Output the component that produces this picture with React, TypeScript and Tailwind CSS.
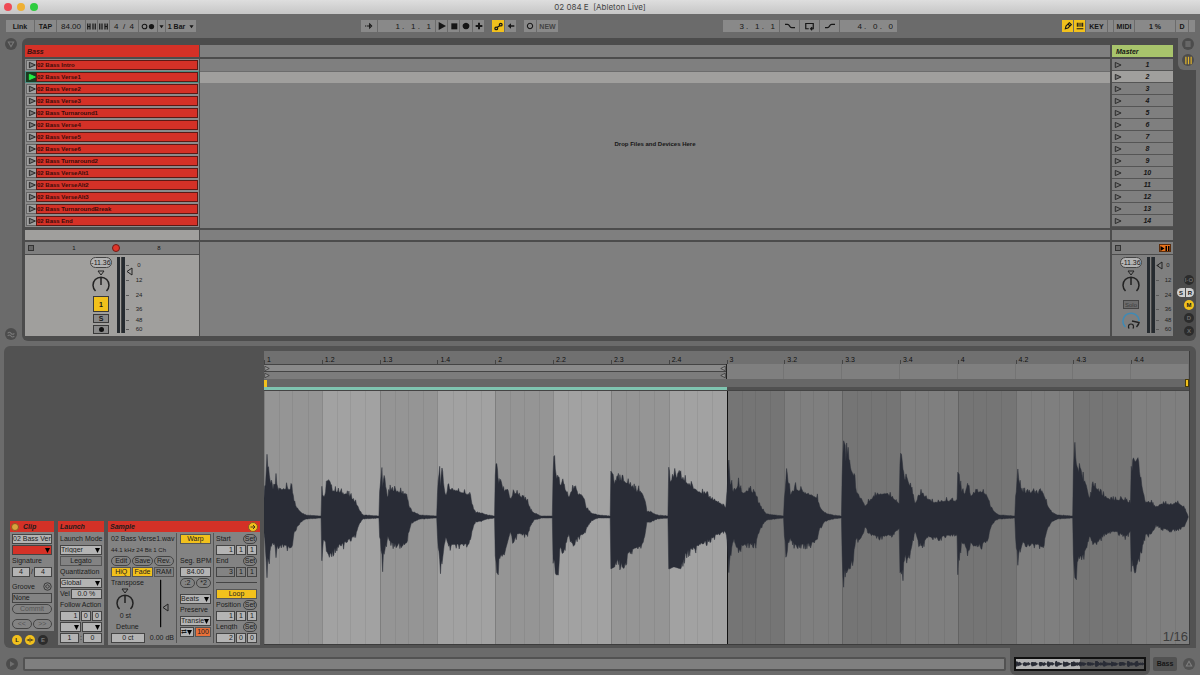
import type { ReactNode } from 'react';

const clips = [
  'Intro', 'Verse1', 'Verse2', 'Verse3', 'Turnaround1', 'Verse4', 'Verse5', 'Verse6',
  'Turnaround2', 'VerseAlt1', 'VerseAlt2', 'VerseAlt3', 'TurnaroundBreak', 'End',
];
const playing = 1;

const beats = ['1', '1.2', '1.3', '1.4', '2', '2.2', '2.3', '2.4', '3', '3.2', '3.3', '3.4', '4', '4.2', '4.3', '4.4'];

// [x inside the beat, height above the centre, height below it]
const envelope: number[][][] = [
  [[0, 20, 15], [1, 35, 25], [3, 63, 61], [5, 47, 42], [7, 33, 30], [10, 28, 25], [12, 39, 38], [14, 28, 28], [20, 30, 30], [28, 29, 32], [30, 16, 17], [33, 9, 10], [38, 4, 4], [42, 2, 2], [57, 1, 1]],
  [[0, 33, 44], [2, 22, 25], [5, 34, 36], [7, 38, 41], [10, 28, 37], [15, 27, 30], [20, 25, 29], [25, 24, 25], [30, 20, 22], [34, 15, 18], [37, 8, 8], [41, 2, 2], [57, 1, 1]],
  [[0, 25, 20], [2, 53, 45], [3, 40, 55], [5, 38, 35], [8, 20, 20], [10, 28, 26], [15, 28, 28], [22, 25, 29], [27, 24, 27], [29, 12, 14], [32, 6, 6], [40, 2, 2], [57, 1, 1]],
  [[0, 25, 20], [2, 60, 50], [3, 40, 57], [5, 44, 42], [8, 22, 20], [11, 30, 30], [18, 28, 29], [28, 25, 29], [33, 22, 24], [35, 11, 12], [38, 5, 5], [44, 4, 4], [50, 2, 2], [57, 1, 1]],
  [[0, 40, 40], [1, 58, 55], [3, 40, 58], [5, 35, 40], [9, 27, 40], [12, 30, 28], [15, 18, 16], [18, 25, 25], [22, 25, 18], [27, 20, 17], [32, 17, 19], [35, 8, 8], [39, 4, 3], [46, 1, 1], [57, 1, 1]],
  [[0, 45, 45], [1, 67, 54], [3, 46, 58], [5, 44, 58], [7, 34, 30], [10, 33, 40], [13, 28, 24], [16, 20, 18], [20, 30, 30], [25, 24, 20], [31, 20, 18], [33, 10, 12], [38, 4, 4], [45, 2, 1], [57, 1, 1]],
  [[0, 46, 52], [4, 40, 50], [7, 38, 45], [13, 38, 52], [18, 35, 36], [25, 28, 33], [31, 26, 30], [34, 18, 20], [36, 6, 5], [40, 5, 5], [46, 2, 2], [57, 1, 1]],
  [[0, 50, 52], [1, 45, 52], [5, 42, 50], [12, 42, 52], [18, 36, 36], [25, 30, 32], [35, 24, 27], [45, 18, 20], [53, 13, 16], [57, 10, 14]],
  [[0, 20, 20], [2, 60, 58], [4, 38, 40], [7, 25, 22], [12, 34, 35], [16, 25, 27], [22, 28, 28], [29, 24, 28], [32, 14, 16], [36, 8, 8], [40, 3, 3], [57, 1, 1]],
  [[0, 20, 20], [2, 50, 50], [4, 40, 30], [6, 24, 22], [11, 30, 30], [18, 26, 29], [25, 24, 28], [33, 20, 24], [35, 10, 12], [41, 4, 4], [48, 2, 2], [57, 1, 1]],
  [[0, 40, 40], [1, 78, 74], [3, 72, 60], [6, 65, 56], [9, 50, 50], [12, 42, 35], [14, 28, 22], [17, 20, 25], [19, 20, 22], [23, 11, 10], [28, 18, 18], [35, 24, 20], [44, 25, 20], [50, 21, 18], [57, 14, 12]],
  [[0, 55, 50], [1, 67, 55], [3, 50, 64], [5, 38, 40], [8, 38, 45], [12, 28, 28], [15, 14, 14], [18, 20, 25], [22, 25, 30], [28, 18, 20], [35, 15, 22], [45, 17, 20], [57, 17, 18]],
  [[0, 45, 58], [2, 42, 45], [4, 30, 28], [7, 24, 28], [10, 36, 38], [13, 22, 26], [18, 27, 28], [25, 26, 28], [30, 20, 24], [33, 10, 10], [37, 5, 4], [41, 2, 2], [57, 1, 1]],
  [[0, 20, 20], [2, 50, 50], [4, 36, 38], [7, 26, 26], [12, 26, 28], [20, 25, 28], [28, 24, 28], [32, 12, 12], [36, 5, 5], [42, 2, 2], [57, 1, 1]],
  [[0, 50, 40], [1, 80, 60], [3, 60, 63], [5, 48, 42], [9, 40, 42], [13, 34, 32], [16, 18, 20], [20, 34, 28], [25, 28, 25], [30, 22, 18], [38, 18, 15], [45, 18, 16], [52, 18, 20], [57, 14, 15]],
  [[0, 50, 50], [2, 60, 52], [4, 55, 57], [7, 60, 46], [9, 42, 35], [12, 26, 28], [14, 16, 18], [20, 15, 18], [25, 10, 8], [30, 14, 12], [40, 13, 14], [47, 15, 12], [53, 10, 10], [56, 3, 3], [57, 0, 0]],
];

const BEAT = 57.75;

const noise = (n: number) => {
  const v = Math.sin(n * 12.9898) * 43758.5453;
  return v - Math.floor(v);
};

function level(points: number[][], x: number, side: number) {
  const i = points.findIndex(p => p[0] >= x);
  if (i === -1) return points[points.length - 1][side];
  if (i === 0) return points[0][side];
  const a = points[i - 1];
  const b = points[i];
  return a[side] + ((b[side] - a[side]) * (x - a[0])) / (b[0] - a[0]);
}

// the attack stays narrow, the body is full with a few spikes
const ragged = (x: number, seed: number) => {
  const n = noise(seed);
  return x > 0 && x < 4 ? 0.75 + n * 0.27 : 0.93 + n * n * n * 0.24;
};

function wavePath() {
  const top: string[] = [];
  const bottom: string[] = [];
  envelope.forEach((points, beat) => {
    const peak = Math.max(...points.map(p => p[1]));
    const trough = Math.max(...points.map(p => p[2]));
    for (let i = 0; i <= 76; i++) {
      const x = i * 0.75;
      const px = (beat * BEAT + x).toFixed(1);
      const lift = level(points, x, 1);
      const drop = level(points, x, 2);
      const up = lift > peak * 0.92 ? lift : lift * ragged(x, beat * 83 + i);
      const down = drop > trough * 0.95 ? drop : drop * ragged(x, beat * 97 + i + 2000);
      top.push(`${px} ${(126.5 - up).toFixed(1)}`);
      bottom.unshift(`${px} ${(126.5 + down).toFixed(1)}`);
    }
  });
  return `M${top.join('L')}L${bottom.join('L')}Z`;
}

const wave = wavePath();

function ToolButton({ className, label, children }: { className: string; label?: string; children: ReactNode }) {
  return (
    <button aria-label={label} className={`flex h-3 items-center justify-center text-[7px] font-bold leading-none ${className}`}>
      {children}
    </button>
  );
}

function Icon({ d, size = 'size-2', fill = false }: { d: string; size?: string; fill?: boolean }) {
  return (
    <svg viewBox="0 0 12 12" className={size} fill={fill ? 'currentColor' : 'none'} stroke="currentColor" strokeWidth={fill ? 0 : 1.6}>
      <path d={d} />
    </svg>
  );
}

function Toolbar() {
  const b = 'bg-[#898989]';
  const position = 'h-3 bg-[#898989] pr-1 text-right text-[8px] leading-none outline-none';
  return (
    <div className="flex items-center justify-between py-[6px] pl-[6px] pr-[5px]">
      <div className="flex gap-px">
        <ToolButton className={`w-7 ${b}`}>Link</ToolButton>
        <ToolButton className={`w-[21px] ${b}`}>TAP</ToolButton>
        <input aria-label="Tempo" defaultValue="84.00" className="h-3 w-7 bg-[#898989] text-center text-[8px] leading-none outline-none" />
        <ToolButton className={`w-[11px] ${b}`} label="Nudge down"><Icon d="M1 2v8M4 2v8M8 2v8M11 2v8M1 6h3" size="size-[9px]" /></ToolButton>
        <ToolButton className={`w-[11px] ${b}`} label="Nudge up"><Icon d="M1 2v8M4 2v8M8 2v8M11 2v8M8 6h3" size="size-[9px]" /></ToolButton>
        <input aria-label="Time signature" defaultValue="4  /  4" className="h-3 w-7 bg-[#898989] text-center text-[8px] leading-none outline-none" />
        <ToolButton className={`w-[18px] ${b}`} label="Metronome">
          <svg viewBox="0 0 24 12" className="h-[7px] w-[14px]"><circle cx="6" cy="6" r="4" fill="none" stroke="currentColor" strokeWidth="1.800" /><circle cx="18" cy="6" r="4.500" fill="currentColor" /></svg>
        </ToolButton>
        <ToolButton className={`w-[7px] ${b}`} label="Metronome settings"><Icon size="size-[5px]" fill d="M1 3h10L6 10z" /></ToolButton>
        <ToolButton className={`w-[30px] gap-1 ${b}`}>1 Bar <Icon size="size-[5px]" fill d="M1 3h10L6 10z" /></ToolButton>
      </div>
      <div className="flex gap-2">
        <div className="flex gap-px">
          <ToolButton className={`w-4 ${b}`} label="Follow"><Icon d="M0 6h2M3 6h4M7 3l3 3-3 3z" /></ToolButton>
          <input aria-label="Arrangement position" defaultValue="1 .   1 .   1" className={`w-[57px] ${position}`} />
          <ToolButton className={`w-[11px] ${b}`} label="Play"><Icon fill d="M1 0l11 6-11 6z" /></ToolButton>
          <ToolButton className={`w-[11px] ${b}`} label="Stop"><Icon fill d="M2 2h9v9H2z" /></ToolButton>
          <ToolButton className={`w-3 ${b}`} label="Record"><Icon fill d="M6 1a5 5 0 1 0 .01 0z" /></ToolButton>
          <ToolButton className={`w-[11px] ${b}`} label="Overdub"><Icon fill d="M4.500 1h3v3.500H11v3H7.500V11h-3V7.500H1v-3h3.500z" /></ToolButton>
        </div>
        <div className="flex gap-px">
          <ToolButton className="w-3 bg-[#f2c11c]" label="Automation arm">
            <svg viewBox="0 0 12 12" className="size-[9px]" fill="none" stroke="currentColor" strokeWidth="1.700"><circle cx="3" cy="8.500" r="1.800" /><circle cx="9" cy="3.500" r="1.800" /><path d="M4.500 7L7.500 5" /></svg>
          </ToolButton>
          <ToolButton className={`w-[11px] ${b}`} label="Re-enable automation"><Icon fill d="M11 5H6V2L1 6l5 4V7h5z" /></ToolButton>
        </div>
        <div className="flex gap-px">
          <ToolButton className={`w-3 ${b}`} label="Session record"><Icon d="M6 2a4 4 0 1 0 .01 0z" /></ToolButton>
          <ToolButton className={`w-[21px] text-[#444] ${b}`}>NEW</ToolButton>
        </div>
      </div>
      <div className="flex gap-px">
        <input aria-label="Loop start" defaultValue="3 .   1 .   1" className={`w-14 ${position}`} />
        <ToolButton className={`w-[19px] ${b}`} label="Punch in"><Icon size="size-[10px]" d="M0 4h3c3 0 2 4 5 4h4" /></ToolButton>
        <ToolButton className={`w-[19px] ${b}`} label="Loop"><Icon size="size-[9px]" d="M5 9H1V2h10v7H8M9.500 7L7.500 9l2 2" /></ToolButton>
        <ToolButton className={`w-[19px] ${b}`} label="Punch out"><Icon size="size-[10px]" d="M0 8h3c3 0 2-4 5-4h4" /></ToolButton>
        <input aria-label="Loop length" defaultValue="4 .   0 .   0" className={`w-[57px] ${position}`} />
      </div>
      <div className="flex gap-px">
        <ToolButton className="w-[11px] bg-[#f2c11c]" label="Draw mode"><Icon d="M2 10l1-4 5-5 3 3-5 5zM6 3l3 3" /></ToolButton>
        <ToolButton className="w-[11px] bg-[#f2c11c]" label="Computer MIDI keyboard"><Icon d="M2 1v6M4.500 1v6M7.500 1v6M10 1v6M1 10h10" /></ToolButton>
        <ToolButton className={`w-[21px] ${b}`}>KEY</ToolButton>
        <div className="w-[5px] bg-[#898989]" />
        <ToolButton className={`w-5 ${b}`}>MIDI</ToolButton>
        <ToolButton className={`w-10 ${b}`}>1 %</ToolButton>
        <ToolButton className={`w-3 ${b}`}>D</ToolButton>
        <div className="w-[6px] bg-[#898989]" />
      </div>
    </div>
  );
}

function PlayTriangle({ active = false }: { active?: boolean }) {
  return (
    <svg viewBox="0 0 12 12" className="size-2" fill={active ? '#22ee44' : '#777'} stroke={active ? '#22ee44' : '#2b2b2b'} strokeWidth="1.500">
      <path d="M2 2l9 4-9 4z" />
    </svg>
  );
}

function Knob({ label, blue = false }: { label: string; blue?: boolean }) {
  return (
    <label className="relative block">
      <input type="range" aria-label={label} className="absolute inset-0 size-full opacity-0" />
      {blue ? (
        <svg viewBox="0 0 20 20" className="size-5" fill="none" strokeWidth="1.500">
          <path d="M4.500 16A8 8 0 1 1 18 10" stroke="#3f8ab5" />
          <path d="M11 10l7 1.500a8 8 0 0 1-2.500 4.500" stroke="#222" />
          <path d="M7.500 16.500v-1a2.500 2.500 0 0 1 5 0v1M7 17h1.500M11.500 17H13" stroke="#222" strokeWidth="1.200" />
        </svg>
      ) : (
        <svg viewBox="0 0 20 24" className="h-6 w-5" fill="none" stroke="#222" strokeWidth="1.500">
          <path d="M7 1h6l-3 4z" strokeWidth="1" />
          <path d="M4.500 21a8 8 0 1 1 11 0M10 7v8" />
        </svg>
      )}
    </label>
  );
}

function Mixer({ master = false }: { master?: boolean }) {
  const scale: [string, string][] = [
    ['0', 'h-[15px]'], ['12', 'h-[15px]'], ['24', 'h-[15px]'], ['36', 'h-[13px]'], ['48', 'h-[9px]'], ['60', 'h-[9px]'],
  ];
  return (
    <div className={`flex flex-1 py-[2px] ${master ? 'bg-[#7f7f7f] pl-[7px]' : 'bg-[#a09f9d] pl-16'}`}>
      <div className="flex w-6 shrink-0 flex-col items-center">
        <span className="rounded-full border border-[#444] bg-[#b4b4b4] py-px text-[7px] leading-none">-11.36</span>
        <div className="mt-[2px]"><Knob label={master ? 'Master pan' : 'Bass pan'} /></div>
        {master ? (
          <>
            <button className="mt-[6px] flex h-[9px] w-4 items-center justify-center border border-[#444] bg-[#6c6c6c] text-[6px] leading-none text-[#3c3c3c]">Solo</button>
            <div className="mt-[2px]"><Knob blue label="Cue volume" /></div>
          </>
        ) : (
          <>
            <button aria-label="Track activator" className="mt-[2px] size-4 border border-[#3a3a3a] bg-[#f2c11c] text-[7px] font-bold leading-none">1</button>
            <button className="mt-[2px] h-[9px] w-4 border border-[#3a3a3a] bg-[#8a8a8a] text-[7px] font-bold leading-none">S</button>
            <button aria-label="Arm" className="mt-[2px] flex h-[9px] w-4 items-center justify-center border border-[#3a3a3a] bg-[#8a8a8a]"><span className="size-[5px] rounded-full bg-[#111]" /></button>
          </>
        )}
      </div>
      <label className="relative ml-1 flex h-[76px] w-2 shrink-0 justify-between">
        <span className="w-[3px] bg-[#262b30]" />
        <span className="w-px bg-[#444]" />
        <span className="w-[3px] bg-[#262b30]" />
        <input type="range" aria-label={master ? 'Master volume' : 'Bass volume'} className="absolute inset-0 size-full opacity-0" />
      </label>
      <svg viewBox="0 0 8 76" className="h-[76px] w-2 shrink-0" fill="none" stroke="#222">
        <path d="M1 8.500h3M1 23.500h3M1 38.500h3M1 52.500h3M1 63.500h3M1 72.500h3" stroke="#5a5a5a" />
        {master ? <path d="M7 5v7L2 8.500z" /> : <path d="M7 11v7l-5-3.500z" />}
      </svg>
      <div className={`shrink-0 text-[6px] leading-none text-[#222] ${master ? 'w-[10px]' : 'w-3'}`}>
        {scale.map(([text, height]) => (
          <div key={text} className={`flex items-center justify-center ${height}`}>{text}</div>
        ))}
      </div>
    </div>
  );
}

function RoundIcon({ className, children }: { className: string; children?: ReactNode }) {
  return <span className={`flex size-[10px] items-center justify-center rounded-full text-[6px] font-bold leading-none ${className}`}>{children}</span>;
}

function Session() {
  return (
    <section className="flex pr-1">
      <div className="flex w-[22px] flex-col items-center justify-between pb-px">
        <button aria-label="Show browser" className="flex size-3 items-center justify-center rounded-full bg-[#4c4c4c] text-[#7a7a7a]"><Icon d="M2 3h8l-4 7z" /></button>
        <button aria-label="Show groove pool" className="flex size-3 items-center justify-center rounded-full bg-[#4c4c4c] text-[#7a7a7a]"><Icon d="M1 5q2.500-3 5 0t5 0M1 9q2.500-3 5 0t5 0" /></button>
      </div>
      <div className="flex flex-1 rounded-md bg-[#4c4c4c] pb-[5px] pl-[3px]">
        <div className="flex w-[174px] flex-col pt-[7px]">
          <h2 className="flex h-3 items-center bg-[#d43127] pl-[2px] text-[7px] font-bold italic leading-none text-[#3a1010]">Bass</h2>
          <div className="mt-[2px]">
            {clips.map((clip, i) => (
              <div key={clip} className={`flex h-3 border ${i === playing ? 'border-[#4f8f84]' : 'border-[#8b8b8b]'}`}>
                <button aria-label={`Launch ${clip}`} className={`flex w-[10px] items-center justify-center border-y border-l ${i === playing ? 'border-[#1c3a22] bg-[#1c3a22]' : 'border-[#666] bg-[#a0a0a0]'}`}>
                  <PlayTriangle active={i === playing} />
                </button>
                <button className="flex-1 border border-[#5a1a16] bg-[#d43127] text-left text-[6px] font-bold leading-none text-[#3a0c0a]">02 Bass {clip}</button>
              </div>
            ))}
          </div>
          <div className="mt-[3px] h-[10px] bg-[#a09f9d]" />
          <div className="mt-[2px] mb-px flex h-3 items-center bg-[#7f7f7f] pl-[3px] text-[6px] leading-none">
            <button aria-label="Stop clips" className="size-[6px] border border-[#333] bg-[#666]" />
            <span className="w-20 text-center">1</span>
            <span className="-ml-[2px] size-2 rounded-full border border-[#701a15] bg-[#e0362a]" />
            <span className="w-[78px] text-center">8</span>
          </div>
          <Mixer />
        </div>
        <div className="ml-px flex flex-1 flex-col pt-[7px]">
          <div className="h-3 bg-[#7f7f7f]" />
          <div className="relative mt-[2px] flex h-[169px] flex-col bg-[#7f7f7f]">
            <div className="mt-3 h-3 border-t border-[#6c6c6c] bg-[#a09f9d]" />
            <p className="absolute inset-0 flex items-center justify-center text-[6px] font-bold leading-none">Drop Files and Devices Here</p>
          </div>
          <div className="mt-[2px] h-[10px] bg-[#7f7f7f]" />
          <div className="mt-[2px] flex-1 bg-[#7f7f7f]" />
        </div>
        <div className="ml-[2px] flex w-[61px] flex-col pt-[7px]">
          <h2 className="flex h-3 items-center bg-[#a8c46c] pl-1 text-[7px] font-bold italic leading-none">Master</h2>
          <div className="mt-[2px]">
            {clips.map((clip, i) => (
              <button key={clip} className={`flex h-3 w-full items-center border-b border-[#555] pl-[2px] text-[7px] font-bold italic leading-none ${i === playing ? 'bg-[#a09f9d]' : 'bg-[#7f7f7f]'}`}>
                <PlayTriangle />
                <span className="w-[53px] text-center">{i + 1}</span>
              </button>
            ))}
          </div>
          <div className="mt-[3px] h-[10px] bg-[#7f7f7f]" />
          <div className="mt-[2px] mb-px flex h-3 items-center justify-between bg-[#7f7f7f] pl-[3px] pr-[2px]">
            <button aria-label="Stop all clips" className="size-[6px] border border-[#333] bg-[#666]" />
            <button aria-label="Back to arrangement" className="flex h-2 w-3 items-center justify-center border border-[#5a2c0c] bg-[#e8731c]">
              <svg viewBox="0 0 20 10" className="h-[5px] w-[10px]"><path d="M1 0l8 5-8 5zM11 0h3v10h-3zM16 0h3v10h-3z" /></svg>
            </button>
          </div>
          <Mixer master />
        </div>
        <div className="flex w-[23px] flex-col items-end">
          <div className="flex h-8 w-[18px] flex-col items-center gap-1 rounded-bl-md bg-[#6b6b6b] pl-[2px]">
            <button aria-label="Arrangement view" className="flex size-3 items-center justify-center rounded-full bg-[#4c4c4c] text-[#828282]"><Icon d="M2 3h8M2 6h8M2 9h8" /></button>
            <button aria-label="Session view" className="flex size-3 items-center justify-center rounded-full bg-[#4c4c4c] text-[#e3b52a]"><Icon d="M2.500 1v10M6 1v10M9.500 1v10" size="size-[9px]" /></button>
          </div>
          <div className="mt-auto flex flex-col items-end gap-[3px] pr-[2px]">
            <RoundIcon className="bg-[#2c2c2c] text-[#6a6a6a]">I·O</RoundIcon>
            <div className="flex gap-px text-[6px] font-bold leading-none">
              <span className="flex h-[9px] w-2 items-center justify-center rounded-l-full bg-[#d0d0d0]">S</span>
              <span className="flex h-[9px] w-2 items-center justify-center rounded-r-full bg-[#d0d0d0]">R</span>
            </div>
            <RoundIcon className="bg-[#f2c11c]">M</RoundIcon>
            <RoundIcon className="bg-[#2c2c2c] text-[#6a6a6a]">D</RoundIcon>
            <RoundIcon className="bg-[#2c2c2c] text-[#6a6a6a]">X</RoundIcon>
          </div>
        </div>
      </div>
    </section>
  );
}

function Row({ className = '', children }: { className?: string; children?: ReactNode }) {
  return <div className={`flex h-[11px] items-center gap-px whitespace-nowrap ${className}`}>{children}</div>;
}

function Field({ label, value, className = 'bg-[#b4b4b4]' }: { label: string; value: string; className?: string }) {
  return <input aria-label={label} defaultValue={value} className={`h-[10px] w-0 min-w-0 flex-1 border border-[#444] text-center leading-none outline-none ${className}`} />;
}

function Select({ label, value = '', className = 'bg-[#b4b4b4]' }: { label: string; value?: string; className?: string }) {
  return (
    <span className="relative flex h-[10px] flex-1">
      <select aria-label={label} className={`h-[10px] w-0 min-w-0 flex-1 appearance-none border border-[#444] pr-[6px] leading-none outline-none ${className}`}>
        <option>{value}</option>
      </select>
      <svg viewBox="0 0 10 10" className="pointer-events-none absolute right-[2px] top-[3px] size-[5px]"><path d="M0 0h10L5 10z" /></svg>
    </span>
  );
}

function Pill({ children, className = '' }: { children: ReactNode; className?: string }) {
  return <button className={`flex h-[10px] flex-1 items-center justify-center rounded-full border border-[#444] leading-none ${className}`}>{children}</button>;
}

function Toggle({ children, className = 'bg-[#f2c11c]' }: { children: ReactNode; className?: string }) {
  return <button className={`flex h-[10px] flex-1 items-center justify-center border border-[#555] leading-none ${className}`}>{children}</button>;
}

function Triple({ label, values, className = 'bg-[#b4b4b4]' }: { label: string; values: string[]; className?: string }) {
  return (
    <Row>
      <input aria-label={`${label} bars`} defaultValue={values[0]} className={`h-[10px] w-0 min-w-0 flex-[2] border border-[#444] pr-px text-right leading-none outline-none ${className}`} />
      <Field label={`${label} beats`} value={values[1]} className={className} />
      <Field label={`${label} sixteenths`} value={values[2]} className={className} />
    </Row>
  );
}

function SetRow({ label }: { label: string }) {
  return (
    <Row className="justify-between">
      <span className="w-[25px] overflow-hidden">{label}</span>
      <Pill className="max-w-[14px]">Set</Pill>
    </Row>
  );
}

function ClipPanels() {
  const header = 'flex h-[11px] items-center bg-[#d43127] text-[7px] font-bold italic leading-none';
  return (
    <div className="flex w-[260px] items-end gap-1 pl-[6px] text-[7px] leading-none text-[#1c1c1c]">
      <div className="w-11">
        <div className="bg-[#838383]">
          <h3 className={`gap-1 pl-px ${header}`}><span className="size-2 rounded-full border border-[#8a5c20] bg-[#d8a23c]" />Clip</h3>
          <div className="px-[2px] pt-px pb-[2px]">
            <Row><input aria-label="Clip name" defaultValue="02 Bass Verse1" className="h-[10px] w-0 min-w-0 flex-1 border border-[#444] bg-[#b4b4b4] outline-none" /></Row>
            <Row><Select label="Clip colour" className="bg-[#d43127]" /></Row>
            <Row>Signature</Row>
            <Row><Field label="Numerator" value="4" />/<Field label="Denominator" value="4" /></Row>
            <Row className="mt-1 justify-between">Groove
              <svg viewBox="0 0 12 12" className="size-[9px]" fill="none" stroke="#333" strokeWidth="1.200"><circle cx="6" cy="6" r="5" /><path d="M3.500 7c0-4 4-4 4-2M8.500 5c0 4-4 4-4 2" /></svg>
            </Row>
            <Row><input aria-label="Groove" defaultValue="None" className="h-[10px] w-0 min-w-0 flex-1 border border-[#444] bg-[#838383] outline-none" /></Row>
            <Row><Pill className="text-[#555]">Commit</Pill></Row>
            <Row className="mt-1 gap-[3px]"><Pill className="text-[#555]">&lt;&lt;</Pill><Pill className="text-[#555]">&gt;&gt;</Pill></Row>
          </div>
        </div>
        <div className="flex h-[14px] items-center gap-[3px] pl-[2px] pt-[3px]">
          <RoundIcon className="bg-[#f2c11c]">L</RoundIcon>
          <RoundIcon className="bg-[#f2c11c]">
            <svg viewBox="0 0 12 12" className="size-2" stroke="#222" strokeWidth="1"><path d="M1 6h10M3.500 4.500v3M6 2.500v7M8.500 4.500v3" /></svg>
          </RoundIcon>
          <RoundIcon className="bg-[#2c2c2c] text-[#777]">E</RoundIcon>
        </div>
      </div>
      <div className="w-[46px] bg-[#838383]">
        <h3 className={`pl-[2px] ${header}`}>Launch</h3>
        <div className="px-[2px] pt-px pb-[2px]">
          <Row>Launch Mode</Row>
          <Row><Select label="Launch mode" value="Trigger" /></Row>
          <Row><Toggle className="bg-[#838383]">Legato</Toggle></Row>
          <Row>Quantization</Row>
          <Row><Select label="Quantization" value="Global" /></Row>
          <Row>Vel<Field label="Velocity" value="0.0 %" /></Row>
          <Row>Follow Action</Row>
          <Triple label="Follow time" values={['1', '0', '0']} />
          <Row className="gap-[3px]"><Select label="Follow action A" /><Select label="Follow action B" /></Row>
          <Row><Field label="Chance A" value="1" />:<Field label="Chance B" value="0" /></Row>
        </div>
      </div>
      <div className="w-[152px] bg-[#838383]">
        <h3 className={`justify-between px-[2px] ${header}`}>Sample<RoundIcon className="border border-[#8a5c20] bg-[#f2c11c]"><Icon size="size-[6px]" d="M1 6h8M6 2l4 4-4 4" /></RoundIcon></h3>
        <div className="flex px-[3px] pt-px pb-[2px]">
          <div className="w-[63px] shrink-0">
            <Row>02 Bass Verse1.wav</Row>
            <Row className="text-[6px]">44.1 kHz 24 Bit 1 Ch</Row>
            <Row className="gap-[2px]"><Pill>Edit</Pill><Pill>Save</Pill><Pill>Rev.</Pill></Row>
            <Row className="gap-[2px]"><Toggle>HiQ</Toggle><Toggle>Fade</Toggle><Toggle className="bg-[#838383]">RAM</Toggle></Row>
            <div className="flex justify-between">
              <div>
                <Row>Transpose</Row>
                <div className="flex h-[33px] flex-col items-center pr-1"><Knob label="Transpose" /><span>0 st</span></div>
                <Row className="justify-center">Detune</Row>
              </div>
              <label className="relative">
                <svg viewBox="0 0 14 55" className="h-[55px] w-[14px]"><path d="M0 3h1v47H0z" stroke="#161616" strokeWidth="0.500" /><path d="M8 27v7l-5-3.500z" fill="none" stroke="#222" /></svg>
                <input type="range" aria-label="Sample gain" className="absolute inset-0 size-full opacity-0" />
              </label>
            </div>
            <Row className="justify-between"><Field label="Detune" value="0 ct" /><span className="pl-1">0.00 dB</span></Row>
          </div>
          <div className="mx-[2px] w-px bg-[#555]" />
          <div className="w-[33px] shrink-0 px-px">
            <Row><Toggle>Warp</Toggle></Row>
            <Row />
            <Row>Seg. BPM</Row>
            <Row><Field label="Segment BPM" value="84.00" /></Row>
            <Row className="gap-[2px]"><Pill>:2</Pill><Pill>*2</Pill></Row>
            <Row className="mt-[5px]"><Select label="Warp mode" value="Beats" /></Row>
            <Row>Preserve</Row>
            <Row><Select label="Preserve" value="Transients" /></Row>
            <Row><Select label="Loop mode" value="⇄" /><Toggle className="bg-[#e8703a]">100</Toggle></Row>
          </div>
          <div className="mx-px w-px bg-[#555]" />
          <div className="min-w-0 flex-1 pl-px">
            <SetRow label="Start" />
            <Triple label="Start" values={['1', '1', '1']} />
            <SetRow label="End" />
            <Triple label="End" values={['3', '1', '1']} className="bg-[#838383]" />
            <Row><hr className="flex-1 border-[#444]" /></Row>
            <Row><Toggle>Loop</Toggle></Row>
            <SetRow label="Position" />
            <Triple label="Position" values={['1', '1', '1']} />
            <SetRow label="Length" />
            <Triple label="Length" values={['2', '0', '0']} />
          </div>
        </div>
      </div>
    </div>
  );
}

function stripe(i: number) {
  if (i < 8) return i % 2 ? 'bg-[#a2a2a2]' : 'bg-[#959595]';
  return i % 2 ? 'bg-[#7f7f7f]' : 'bg-[#757575]';
}

function LoopArrow({ flip = false }: { flip?: boolean }) {
  return (
    <svg viewBox="0 0 8 8" className="h-[7px] w-[6px]" fill="#999" stroke="#333"><path d={flip ? 'M7 1v6L1 4z' : 'M1 1v6l6-3z'} /></svg>
  );
}

function SampleEditor() {
  return (
    <div className="flex flex-1 flex-col border-r border-b border-[#3c3c3c] bg-[#6e6e6e]">
      <div className="grid h-[13px] grid-cols-16 bg-[#707070] text-[7px] leading-none text-[#111]">
        {beats.map(beat => (
          <span key={beat} className="flex items-end gap-[2px]"><i className="h-1 w-px bg-[#444]" /><span className="pb-px">{beat}</span></span>
        ))}
      </div>
      <div className="grid h-[15px] grid-cols-2">
        <div className="flex flex-col border-r border-[#222]">
          <div className="flex h-2 justify-between border-y border-[#444] bg-[#8a8a8a]"><LoopArrow /><LoopArrow flip /></div>
          <div className="flex h-[7px] justify-between bg-[#7c7c7c]"><LoopArrow /><LoopArrow flip /></div>
        </div>
        <div className="grid grid-cols-8 bg-[#7f7f7f]">
          {beats.slice(8).map(beat => <i key={beat} className="border-r border-[#747474]" />)}
        </div>
      </div>
      <div className="flex h-2 items-center justify-between bg-[#676767]">
        <span className="h-[7px] w-[3px] bg-[#f2c11c]" />
        <span className="h-2 w-1 border border-[#4a3c08] bg-[#f2c11c]" />
      </div>
      <div className="grid h-1 grid-cols-2 border-b border-[#444]">
        <div className="bg-[#7fc4b0]" />
        <div className="bg-[#505050]" />
      </div>
      <div className="relative min-h-60 flex-1">
        <div className="absolute inset-0 grid grid-cols-16">
          {beats.map((beat, i) => (
            <div key={beat} className={`grid grid-cols-4 ${stripe(i)} ${i === 8 ? 'border-l border-[#111]' : 'border-l border-black/15'}`}>
              <i /><i className="border-x border-black/6" /><i /><i className="border-l border-black/6" />
            </div>
          ))}
        </div>
        <svg viewBox="0 0 924 254" preserveAspectRatio="none" className="absolute inset-0 size-full" role="img" aria-label="Waveform">
          <path d={wave} fill="#292c36" stroke="#292c36" strokeWidth="0.500" />
        </svg>
        <span className="absolute bottom-px right-px text-[13px] leading-none text-[#3c3c3c]">1/16</span>
      </div>
    </div>
  );
}

function StatusBar() {
  return (
    <footer className="flex h-[27px] items-center">
      <div className="flex w-[23px] justify-center pt-1">
        <button aria-label="Show info" className="flex size-3 items-center justify-center rounded-full bg-[#4c4c4c] text-[#6f6f6f]"><Icon fill d="M3 2l7 4-7 4z" /></button>
      </div>
      <div className="mt-1 mr-1 h-[14px] flex-1 rounded-xs border-2 border-[#525252] bg-[#7f7f7f]" />
      <div className="flex h-full items-center rounded-b-md bg-[#525252] px-1 pt-1">
        <div className="relative flex h-[14px] w-[132px] border-2 border-[#111]">
          <div className="w-1/2 bg-[#b4b4b4]" />
          <div className="w-1/2 bg-[#5c5c5c]" />
          <svg viewBox="0 0 924 254" preserveAspectRatio="none" className="absolute inset-0 size-full"><path d={wave} fill="#292c36" stroke="#292c36" strokeWidth="14" /></svg>
        </div>
      </div>
      <button className="mt-1 ml-[3px] h-[14px] w-6 rounded-xs bg-[#525252] text-[7px] font-bold leading-none">Bass</button>
      <div className="mt-1 flex w-[23px] justify-center">
        <button aria-label="Toggle detail view" className="flex size-3 items-center justify-center rounded-full bg-[#525252] text-[#7f7f7f]"><Icon d="M2 9h8L6 2z" /></button>
      </div>
    </footer>
  );
}

export default function App() {
  return (
    <div className="flex min-h-screen flex-col bg-[#6b6b6b] font-['Liberation_Sans',Arial,sans-serif] text-[#161616]">
      <header className="flex h-[14px] items-center bg-linear-to-b from-[#dedede] to-[#c6c6c6] px-1">
        <div className="flex flex-1 gap-[5px]">
          <button aria-label="Close" className="size-2 rounded-full bg-[#ee4b55]" />
          <button aria-label="Minimize" className="size-2 rounded-full bg-[#eeb033]" />
          <button aria-label="Zoom" className="size-2 rounded-full bg-[#2fcc3f]" />
        </div>
        <h1 className="whitespace-pre font-[Inter,sans-serif] text-[8px] leading-none text-[#444]">02 084 E  [Ableton Live]</h1>
        <div className="flex-1" />
      </header>
      <Toolbar />
      <Session />
      <section className="mx-1 mt-[5px] flex flex-1 rounded-t-md rounded-bl-md bg-[#525252] pt-[5px] pr-[6px] pb-[3px]">
        <ClipPanels />
        <SampleEditor />
      </section>
      <StatusBar />
    </div>
  );
}
